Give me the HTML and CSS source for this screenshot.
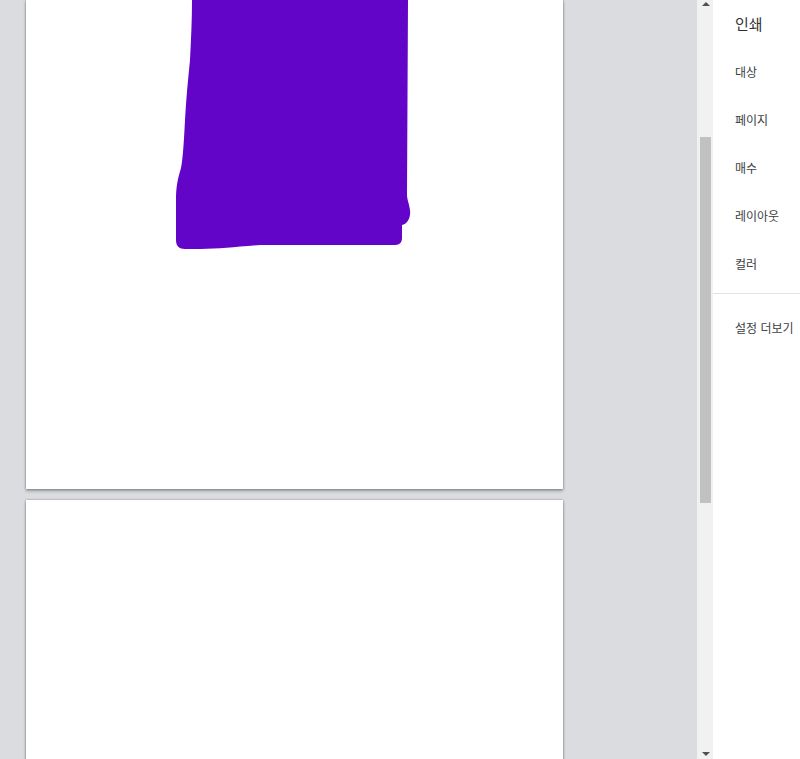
FILE: index.html
```html
<!DOCTYPE html>
<html lang="ko">
<head>
<meta charset="utf-8">
<title>인쇄</title>
<link rel="stylesheet" href="styles.css">
</head>
<body>
<div class="app">
  <main class="preview">
    <div class="page page-first">
      <svg class="drawing" viewBox="26 0 537 489" width="537" height="489" aria-hidden="true">
        <path fill="#6205c8" d="M192 0 C192 20 191 40 190 60 C188 80 186 100 185 120 C184 140 183 158 181 168 C178 178 176 186 176 200 L176 240 C176 246 179 249 185 249 L200 249 C220 249 235 247 260 245 L395 245 C400 245 402 242 402 238 L402 225 C407 224 411 218 410 210 C409 203 407 199 407 195 L408 0 Z"/>
      </svg>
    </div>
    <div class="page page-second"></div>
  </main>
  <div class="scrollbar">
    <span class="arrow arrow-up"></span>
    <div class="track"><div class="thumb"></div></div>
    <span class="arrow arrow-down"></span>
  </div>
  <aside class="sidebar">
    <h1 class="title">인쇄</h1>
    <ul class="settings">
      <li class="setting">대상</li>
      <li class="setting">페이지</li>
      <li class="setting">매수</li>
      <li class="setting">레이아웃</li>
      <li class="setting">컬러</li>
    </ul>
    <div class="more">설정 더보기</div>
  </aside>
</div>
</body>
</html>
```
FILE: styles.css
```css
* { box-sizing: border-box; }
html, body {
  margin: 0;
  padding: 0;
  height: 759px;
  overflow: hidden;
  font-family: "Noto Sans CJK KR", "Noto Sans", "Liberation Sans", sans-serif;
}
.app {
  display: flex;
  width: 800px;
  height: 759px;
}
.preview {
  width: 697px;
  height: 759px;
  background: #dadce0;
  overflow: hidden;
  display: flex;
  flex-direction: column;
  gap: 11px;
  padding-left: 26px;
}
.page {
  width: 537px;
  background: #ffffff;
  box-shadow: 0 0 2px rgba(0, 0, 0, 0.35), 0 2px 3px rgba(0, 0, 0, 0.3);
  flex-shrink: 0;
}
.page-first {
  height: 489px;
  position: relative;
}
.page-second {
  height: 400px;
}
.drawing {
  display: block;
}
.scrollbar {
  width: 16px;
  height: 759px;
  background: #f1f1f1;
  position: relative;
  flex-shrink: 0;
}
.track {
  padding-top: 137px;
  display: flex;
  justify-content: center;
}
.thumb {
  width: 11px;
  height: 366px;
  background: #c1c1c1;
  margin-left: 1px;
}
.arrow {
  position: absolute;
  left: 5px;
  width: 0;
  height: 0;
  border-left: 4px solid transparent;
  border-right: 4px solid transparent;
}
.arrow-up {
  top: 2px;
  border-bottom: 4px solid #505050;
}
.arrow-down {
  bottom: 3px;
  border-top: 4px solid #505050;
}
.sidebar {
  flex: 1;
  background: #ffffff;
  display: flex;
  flex-direction: column;
}
.title {
  margin: 0;
  height: 48px;
  line-height: 48px;
  padding-left: 22px;
  font-size: 15px;
  font-weight: 400;
  color: #303134;
}
.settings {
  list-style: none;
  margin: 0;
  padding: 0 0 5px;
  border-bottom: 1px solid #e3e3e3;
}
.setting {
  height: 48px;
  line-height: 48px;
  padding-left: 22px;
  font-size: 12px;
  color: #3c4043;
  white-space: nowrap;
}
.more {
  margin-top: 10px;
  height: 48px;
  line-height: 48px;
  padding-left: 22px;
  font-size: 12px;
  color: #3c4043;
  white-space: nowrap;
}
```
